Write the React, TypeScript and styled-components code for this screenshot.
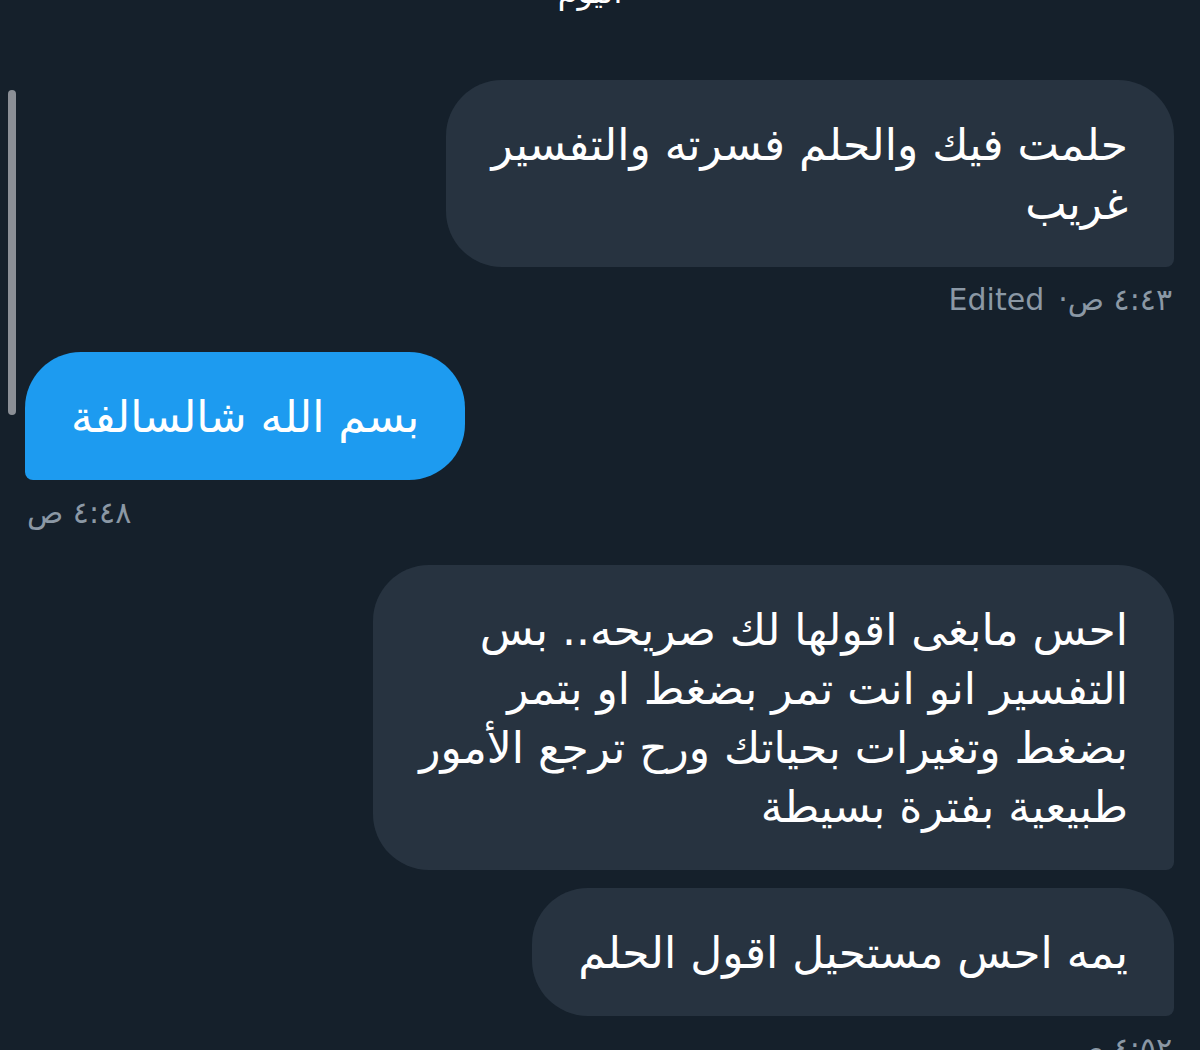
import * as React from 'react';
import styled, { createGlobalStyle } from 'styled-components';

const GlobalStyle = createGlobalStyle`
  html, body {
    margin: 0;
    padding: 0;
    background: #15202b;
    overflow: hidden;
  }
  body {
    font-family: "DejaVu Sans", "Noto Sans", sans-serif;
  }
`;

interface Message {
  id: number;
  mine: boolean;
  lines: string[];
  time?: string;
  edited?: boolean;
}

const messages: Message[] = [
  {
    id: 1,
    mine: true,
    lines: ['حلمت فيك والحلم فسرته والتفسير', 'غريب'],
    time: '٤:٤٣ ص',
    edited: true,
  },
  {
    id: 2,
    mine: false,
    lines: ['بسم الله شالسالفة'],
    time: '٤:٤٨ ص',
  },
  {
    id: 3,
    mine: true,
    lines: [
      'احس مابغى اقولها لك صريحه.. بس',
      'التفسير انو انت تمر بضغط او بتمر',
      'بضغط وتغيرات بحياتك ورح ترجع الأمور',
      'طبيعية بفترة بسيطة',
    ],
  },
  {
    id: 4,
    mine: true,
    lines: ['يمه احس مستحيل اقول الحلم'],
    time: '٤:٥٢ ص',
  },
];

const App: React.FC = () => {
  return (
    <>
      <GlobalStyle />
      <Screen>
        <Scrollbar />
        <DayLabel>اليوم</DayLabel>
        <Thread>
          {messages.map((m) => (
            <Group key={m.id} mine={m.mine} hasTime={!!m.time}>
              <Bubble mine={m.mine}>
                {m.lines.map((l, i) => (
                  <Line key={i}>{l}</Line>
                ))}
              </Bubble>
              {m.time && (
                <Meta>
                  {m.time}
                  {m.edited && (
                    <>
                      ·<EditedTag>Edited</EditedTag>
                    </>
                  )}
                </Meta>
              )}
            </Group>
          ))}
        </Thread>
      </Screen>
    </>
  );
};

const Screen = styled.div`
  position: relative;
  width: 1200px;
  height: 1050px;
  overflow: hidden;
  background: #15202b;
  direction: rtl;
`;

const Scrollbar = styled.div`
  position: absolute;
  left: 8px;
  top: 90px;
  width: 8px;
  height: 325px;
  border-radius: 4px;
  background: #8b8f96;
`;

const DayLabel = styled.div`
  text-align: center;
  color: #ffffff;
  font-size: 32px;
  line-height: 40px;
  margin-top: -28px;
  padding-right: 20px;
`;

const Thread = styled.div`
  display: flex;
  flex-direction: column;
  padding: 68px 26px 0 25px;
`;

interface GroupProps {
  mine: boolean;
  hasTime: boolean;
}

const Group = styled.div<GroupProps>`
  display: flex;
  flex-direction: column;
  align-items: ${({ mine }) => (mine ? 'flex-start' : 'flex-end')};
  margin-bottom: ${({ hasTime }) => (hasTime ? '34px' : '18px')};
`;

const Bubble = styled.div<{ mine: boolean }>`
  background: ${({ mine }) => (mine ? '#273340' : '#1d9bf0')};
  color: #ffffff;
  font-size: 44px;
  line-height: 59px;
  padding: 35px 46px 34px 46px;
  border-radius: ${({ mine }) => (mine ? '56px 56px 8px 56px' : '56px 56px 56px 8px')};
`;

const Line = styled.div`
  white-space: nowrap;
`;

const Meta = styled.div`
  color: #8b98a5;
  font-size: 30px;
  line-height: 36px;
  margin-top: 15px;
  padding: 0 2px;
`;

const EditedTag = styled.span`
  margin-right: 14px;
`;

export default App;
